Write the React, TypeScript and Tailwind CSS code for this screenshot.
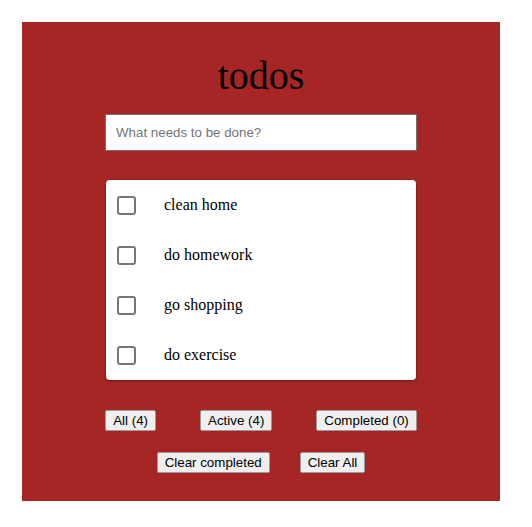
import React, { useState } from 'react';

type Todo = { id: number; text: string; done: boolean };

const initialTodos: Todo[] = [
  { id: 1, text: 'clean home', done: false },
  { id: 2, text: 'do homework', done: false },
  { id: 3, text: 'go shopping', done: false },
  { id: 4, text: 'do exercise', done: false },
];

const btn =
  "h-[21px] px-[7px] bg-[#efefef] border border-[#9a9a9a] rounded-[2px] text-[13.33px] leading-[16px] text-black font-['Liberation_Sans',Arial,sans-serif]";

const App: React.FC = () => {
  const [todos, setTodos] = useState<Todo[]>(initialTodos);
  const [text, setText] = useState('');

  const active = todos.filter((t) => !t.done).length;
  const completed = todos.length - active;

  const toggle = (id: number) =>
    setTodos((prev) => prev.map((t) => (t.id === id ? { ...t, done: !t.done } : t)));

  return (
    <div className="min-h-screen bg-white p-[22px]">
      <div className="w-[478px] h-[479px] bg-[#a62626] flex flex-col items-center pt-[34px]">
        <h1 className="text-[40px] leading-[40px] text-black font-['Liberation_Serif','Times_New_Roman',serif]">
          todos
        </h1>

        <input
          value={text}
          onChange={(e) => setText(e.target.value)}
          placeholder="What needs to be done?"
          className="mt-[18px] w-[312px] h-[37px] bg-white border border-[#7a6f6f] px-[10px] text-[13.33px] text-black placeholder:text-[#757575] outline-none font-['Liberation_Sans',Arial,sans-serif]"
        />

        <ul className="mt-[29px] w-[310px] bg-white rounded-[4px] shadow-[0_1px_3px_rgba(0,0,0,0.35)]">
          {todos.map((todo) => (
            <li key={todo.id} className="h-[50px] flex items-center pl-[11px]">
              <button
                onClick={() => toggle(todo.id)}
                className="w-[19px] h-[19px] border-2 border-[#767676] rounded-[3px] bg-white flex items-center justify-center"
              >
                {todo.done && <span className="w-[9px] h-[9px] bg-[#767676]" />}
              </button>
              <span className="ml-[28px] text-[16px] text-black font-['Liberation_Serif','Times_New_Roman',serif]">
                {todo.text}
              </span>
            </li>
          ))}
        </ul>

        <div className="mt-[30px] flex gap-[44px]">
          <button className={btn}>All ({todos.length})</button>
          <button className={btn}>Active ({active})</button>
          <button className={btn}>Completed ({completed})</button>
        </div>

        <div className="mt-[21px] flex gap-[30px]">
          <button className={btn} onClick={() => setTodos((p) => p.filter((t) => !t.done))}>
            Clear completed
          </button>
          <button className={btn} onClick={() => setTodos([])}>
            Clear All
          </button>
        </div>
      </div>
    </div>
  );
};

export default App;
